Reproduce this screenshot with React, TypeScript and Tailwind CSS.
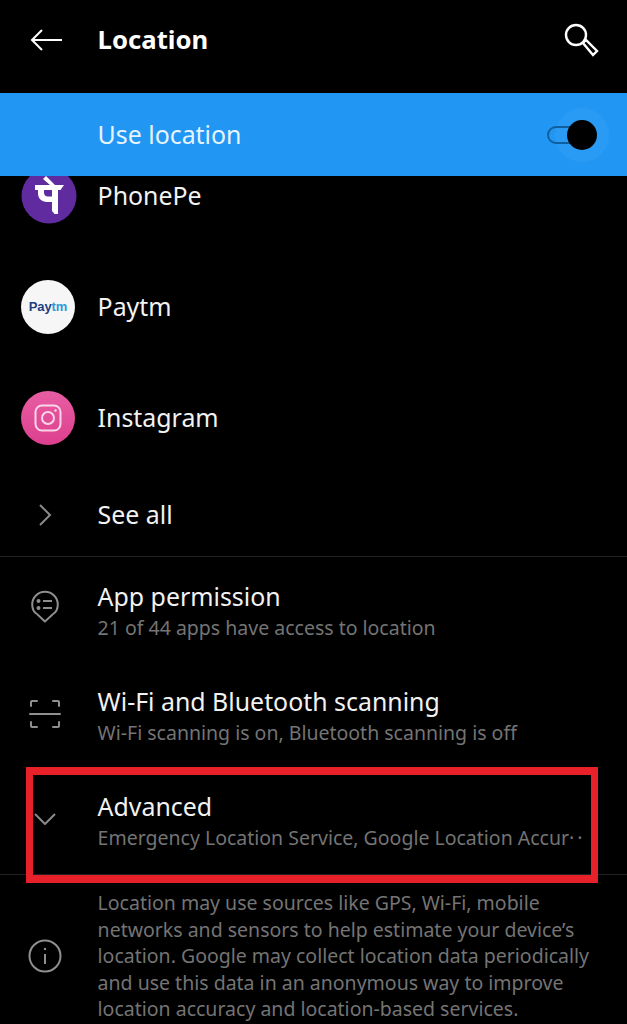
import React from 'react'

const PhonePeLogo = () => (
  <svg viewBox="0 0 56 56" className="w-[56px] h-[56px] shrink-0">
    <circle cx="28" cy="28" r="27.500" fill="#5f2b9f" />
    <path d="M14 17h29l-3.500 5H37v24h-3.500L31 43V34h-5c-5.500 0-9-3.500-9-9v-3h-3z" fill="#fff" />
    <path d="M23 22v2.500c0 2.500 1.500 4 4 4h4V22z" fill="#5f2b9f" />
    <path d="M22 11l3-3 9 9h-5z" fill="#fff" />
  </svg>
)

const InstagramLogo = () => (
  <div className="w-[54px] h-[54px] rounded-full shrink-0 bg-gradient-to-b from-[#e85da3] to-[#dc3f8e] flex items-center justify-center">
    <svg viewBox="0 0 28 28" className="w-[28px] h-[28px]" fill="none" stroke="#fbd5e8" strokeWidth="2">
      <rect x="1.500" y="1.500" width="25" height="25" rx="6.500" />
      <circle cx="14" cy="14" r="6" />
      <circle cx="21.500" cy="6.500" r="1.200" fill="#fbd5e8" stroke="none" />
    </svg>
  </div>
)

const PaytmLogo = () => (
  <div className="w-[54px] h-[54px] rounded-full shrink-0 bg-[#f6f6f6] flex items-center justify-center">
    <span className="text-[13px] font-bold font-['Liberation_Sans',sans-serif] tracking-[-0.1px]">
      <span className="text-[#1d3f82]">Pay</span>
      <span className="text-[#2a9ad8]">tm</span>
    </span>
  </div>
)

const AppRow = ({ icon, label }: { icon: React.ReactNode; label: string }) => (
  <div className="h-[111px] flex items-center">
    <div className="w-[97.600px] pl-[21px]">{icon}</div>
    <span className="text-[24.900px] text-[#f2f2f2]">{label}</span>
  </div>
)

const SettingRow = ({ icon, title, sub }: { icon: React.ReactNode; title: string; sub: React.ReactNode }) => (
  <div className="h-[105px] flex items-center">
    <div className="w-[97.600px] flex justify-center pr-[7px] shrink-0">{icon}</div>
    <div className="min-w-0 flex-1">
      <div className="text-[24.900px] leading-[32px] text-[#f2f2f2]">{title}</div>
      <div className="text-[19.500px] leading-[32px] text-[#747474] whitespace-nowrap">{sub}</div>
    </div>
  </div>
)

const App = () => {
  return (
    <div className="relative w-[627px] h-[1024px] overflow-hidden bg-black font-['Noto_Sans',sans-serif]">
      <header className="h-[93px] pb-[13px] flex items-center">
        <div className="w-[97.600px] pl-[30px]">
          <svg viewBox="0 0 32 24" className="w-[32px] h-[24px]" fill="none" stroke="#fff" strokeWidth="2">
            <path d="M32 12H2M12 2L2 12l10 10" />
          </svg>
        </div>
        <h1 className="flex-1 text-[25.700px] font-bold text-white">Location</h1>
        <svg viewBox="0 0 36 36" className="w-[36px] h-[36px] mr-[28px]" fill="none" stroke="#fff" strokeWidth="2.400">
          <circle cx="13" cy="13" r="10" />
          <path d="M20 21l3-3 11 11-4 4z" />
        </svg>
      </header>

      <div className="relative z-10 h-[83px] bg-[#2196f3] flex items-center">
        <span className="pl-[97.600px] flex-1 text-[24.900px] text-[#e6f4ff]">Use location</span>
        <div className="relative w-[50px] h-[30px] mr-[30px] flex items-center">
          <div className="absolute left-[8px] top-[-12px] w-[54px] h-[54px] rounded-full bg-[#2a9bf5]" />
          <div className="absolute left-0 top-[6px] w-[36px] h-[18px] rounded-full border-[2.500px] border-[#0f5f9f]" />
          <div className="absolute left-[20px] top-0 w-[30px] h-[30px] rounded-full bg-black" />
        </div>
      </div>

      <div className="-mt-[36px]">
        <AppRow icon={<PhonePeLogo />} label="PhonePe" />
        <AppRow icon={<PaytmLogo />} label="Paytm" />
        <AppRow icon={<InstagramLogo />} label="Instagram" />
        <div className="h-[84px] flex items-center border-b border-[#222]">
          <div className="w-[97.600px] pl-[38px]">
            <svg viewBox="0 0 14 24" className="w-[14px] h-[24px]" fill="none" stroke="#8a8a8a" strokeWidth="2">
              <path d="M2 2l10 10L2 22" />
            </svg>
          </div>
          <span className="text-[24.900px] text-[#f2f2f2]">See all</span>
        </div>
      </div>

      <div className="pt-[2px]">
        <SettingRow
          icon={
            <svg viewBox="0 0 28 33" className="w-[28px] h-[33px] mb-[10px]" fill="none" stroke="#8f8f8f" strokeWidth="2">
              <path d="M14 31.500L6.500 24.500C3 22.500 1.200 18.500 1.200 14.500a12.800 12.800 0 0 1 25.600 0c0 4-1.800 8-5.300 10z" />
              <path d="M12 11h9M12 18h9" />
              <circle cx="7.500" cy="11" r="1" fill="#8f8f8f" />
              <circle cx="7.500" cy="18" r="1" fill="#8f8f8f" />
            </svg>
          }
          title="App permission"
          sub="21 of 44 apps have access to location"
        />
        <SettingRow
          icon={
            <svg viewBox="0 0 32 30" className="w-[32px] h-[30px] mb-[5px]" fill="none" stroke="#8f8f8f" strokeWidth="2" strokeLinecap="round">
              <path d="M2 7V3a1 1 0 0 1 1-1h5M24 2h5a1 1 0 0 1 1 1v4M2 23v4a1 1 0 0 0 1 1h5M24 28h5a1 1 0 0 0 1-1v-4" />
              <path d="M1 15h30" />
            </svg>
          }
          title="Wi-Fi and Bluetooth scanning"
          sub="Wi-Fi scanning is on, Bluetooth scanning is off"
        />
        <SettingRow
          icon={
            <svg viewBox="0 0 22 12" className="w-[22px] h-[12px] mb-[6px]" fill="none" stroke="#8a8a8a" strokeWidth="2">
              <path d="M1 1l10 10L21 1" />
            </svg>
          }
          title="Advanced"
          sub={
            <>
              Emergency Location Service, Google Location Accur
              <span className="tracking-[3px]">··</span>
            </>
          }
        />
      </div>

      <div className="border-t border-[#222] flex items-center pt-[15px]">
        <div className="w-[97.600px] flex justify-center pr-[7px] shrink-0">
          <svg viewBox="0 0 34 34" className="w-[34px] h-[34px]" fill="none" stroke="#8f8f8f" strokeWidth="2">
            <circle cx="17" cy="17" r="15.500" />
            <path d="M17 15v10" />
            <circle cx="17" cy="10" r="1.200" fill="#8f8f8f" stroke="none" />
          </svg>
        </div>
        <p className="w-[510px] text-[19.500px] leading-[26.500px] text-[#747474]">
          Location may use sources like GPS, Wi-Fi, mobile networks and sensors to help estimate your device’s location. Google may collect location data periodically and use this data in an anonymous way to improve location accuracy and location-based services.
        </p>
      </div>

      <div className="absolute left-[26px] top-[767px] w-[572px] h-[116px] border-y-[8px] border-x-[7px] border-[#e8202a]" />
    </div>
  )
}

export default App
